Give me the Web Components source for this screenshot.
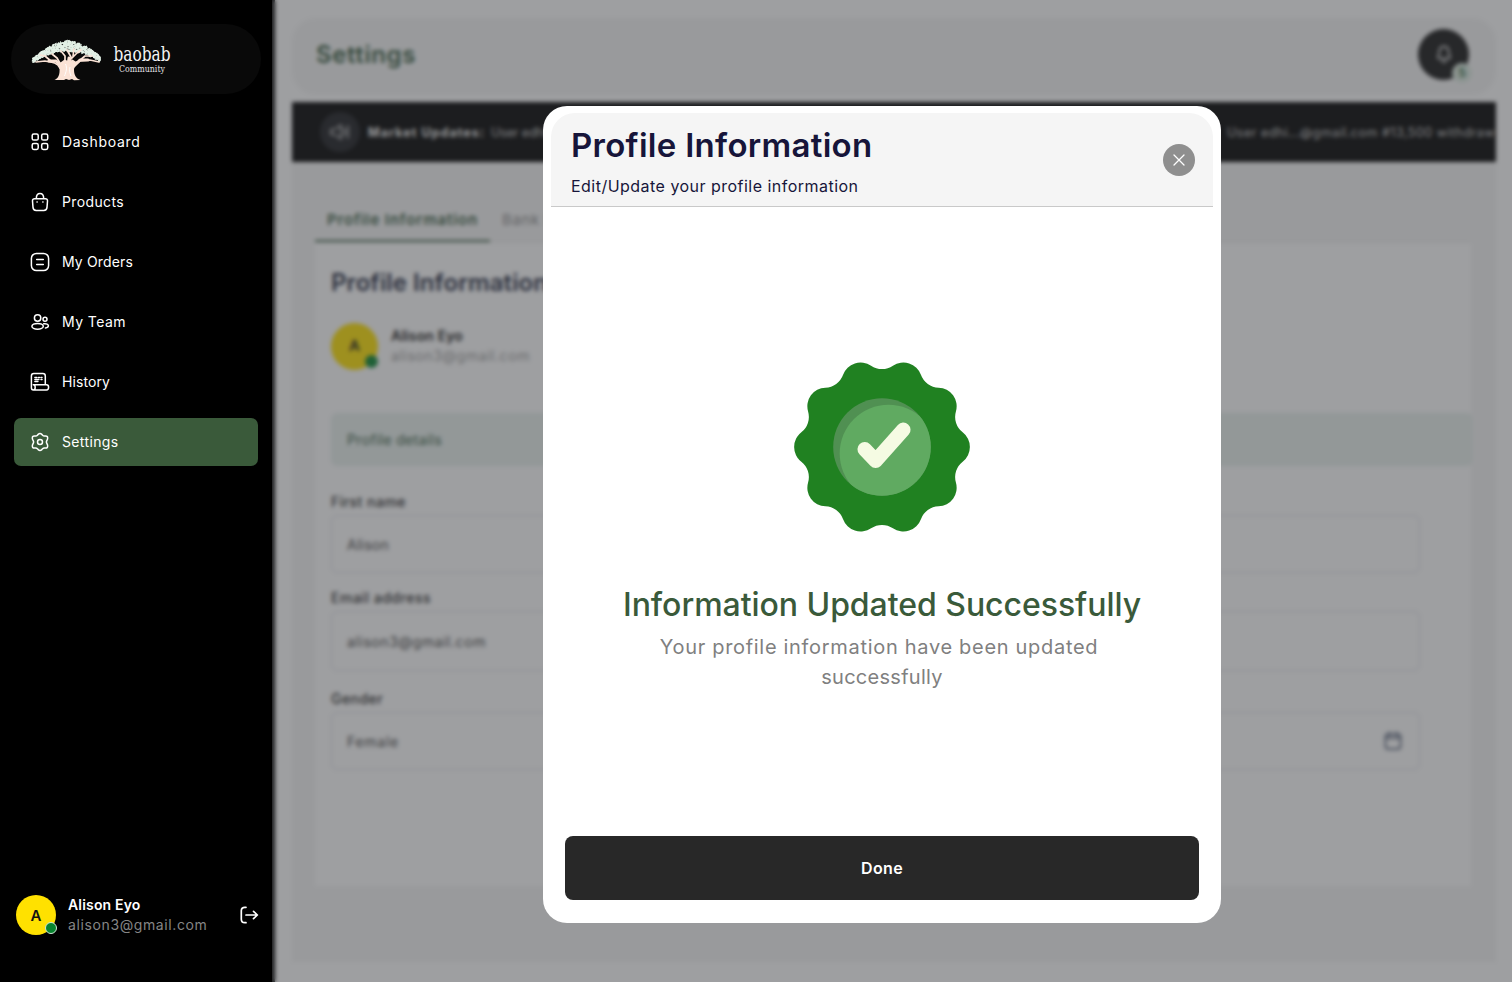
<!DOCTYPE html>
<html lang="en">
<head>
<meta charset="utf-8">
<title>Baobab Community – Settings</title>
<style>
  html, body { margin: 0; height: 100%; overflow: hidden; background: #fff; font-family: Inter, "Open Sans", sans-serif; color: #111; }
</style>
</head>
<body>
<baobab-app></baobab-app>

<script>
const define = (name, html, setup) => {
  const tpl = document.createElement('template');
  tpl.innerHTML = html;
  customElements.define(name, class extends HTMLElement {
    connectedCallback() {
      if (this.shadowRoot) return;
      this.attachShadow({ mode: 'open' }).appendChild(tpl.content.cloneNode(true));
      if (setup) setup(this, this.shadowRoot);
    }
  });
};

/* Single line label tracked out to a given width */
define('fit-text', `<style>
  :host { display: inline-block; white-space: nowrap; }
  span { display: inline-block; }
</style><span><slot></slot></span>`, (host, root) => {
  const span = root.querySelector('span');
  const target = +host.getAttribute('w');
  const width = span.getBoundingClientRect().width;
  const count = host.textContent.length;
  if (target && width) span.style.letterSpacing = ((target - width) / count).toFixed(3) + 'px';
});

const ICONS = {
  dashboard: '<rect x="2.200" y="2" width="6" height="6" rx="1.600"/><rect x="11.700" y="2" width="6" height="6" rx="1.600"/><rect x="2.200" y="11.400" width="6" height="6" rx="1.600"/><rect x="11.700" y="11.400" width="6" height="6" rx="1.600"/>',
  bag: '<path d="M4.6 6.7h10.8c1.3 0 2.2 1 2.1 2.3l-.5 6.4c-.1 1.8-1.400 3-3.200 3H6.200c-1.800 0-3.100-1.200-3.200-3L2.500 9c-.1-1.300.8-2.300 2.100-2.300zM6.300 6.500c0-2.700 1.300-5 3.700-5s3.700 2.300 3.700 5M7 10.100h.2M12.800 10.100h.2"/>',
  orders: '<rect x="1.400" y="1.400" width="17.200" height="17.200" rx="5"/><path d="M6.700 7.600h6.600M6.700 12.400h6.600"/>',
  team: '<circle cx="7.600" cy="6" r="3.200"/><circle cx="15" cy="7.300" r="2"/><ellipse cx="7.600" cy="14.300" rx="5.700" ry="2.900"/><path d="M13.700 11.800c2.700-.4 4.700.5 4.700 2 0 1.100-1.200 1.900-3 2.100"/>',
  history: '<path d="M3.300 17.900c-1.200 0-1.900-.9-1.900-2.200V3.900c0-1.500.9-2.400 2.400-2.400h9.100c1.500 0 2.400.9 2.400 2.400v8.700M3.300 17.900h13.200c1.300 0 2.100-1.100 2.100-2.600s-.8-2.500-2.100-2.500H3.600M3.300 17.900c1.200 0 1.900-1 1.900-2.500s-.7-2.600-1.900-2.600M4.900 5.400h2M8.500 5.400h1M11 5.400h1M4.900 7.500h4M11 7.500h1M4.900 9.600h3"/>',
  settings: '<circle cx="10" cy="10" r="2.500"/><path d="M8.160 2.400Q10 .7 11.840 2.400C12.700 3.200 13.100 4.300 14.900 4C17.200 3.600 18 4.900 17.500 7.100C17.200 8.300 16.400 8.900 16.400 10S17.200 11.700 17.500 12.900C18 15.100 17.200 16.400 14.900 16C13.100 15.700 12.700 16.800 11.840 17.600Q10 19.300 8.160 17.600C7.300 16.800 6.900 15.700 5.100 16C2.800 16.400 2 15.100 2.500 12.900C2.800 11.700 3.600 11.100 3.600 10S2.800 8.300 2.500 7.100C2 4.900 2.800 3.600 5.100 4C6.900 4.300 7.300 3.200 8.160 2.400z"/>',
  logout: '<path d="M6 2.300H4.800C2.600 2.300 1.300 3.500 1.300 5.700v8.600c0 2.200 1.300 3.400 3.500 3.400H6M6 10h11M13.500 6.300L17.400 10l-3.900 3.700"/>',
  close: '<path d="M5 5l10 10M15 5L5 15"/>',
  bell: '<path d="M10 2.500c-3 0-4.600 2.300-4.600 5 0 3-1 3.900-1.500 5.200-.3 1 .4 1.800 1.400 1.800h9.400c1 0 1.700-.8 1.400-1.800-.5-1.300-1.500-2.200-1.500-5.200 0-2.700-1.600-5-4.600-5zM8 17.300c1 .9 3 .9 4 0"/>',
  speaker: '<path d="M1 7.500v5h3.500l6.500 4.500V3L4.500 7.500zM14 6.500c1.300 2 1.300 5 0 7M18 4v12"/>',
  calendar: '<rect x="2.500" y="3" width="15" height="15" rx="3"/><path d="M2.500 7h15M6.500 1.500v3M13.500 1.500v3"/>'
};
define('ui-icon', `<style>
  :host { display: block; width: 20px; height: 20px; flex: none; }
  svg { display: block; width: 100%; height: 100%; fill: none; stroke: currentColor; stroke-linecap: round; stroke-linejoin: round; }
</style><svg viewBox="0 0 20 20"></svg>`, (host, root) => {
  const svg = root.querySelector('svg');
  svg.setAttribute('stroke-width', host.getAttribute('weight') || 1.5);
  svg.innerHTML = ICONS[host.getAttribute('name')];
});

define('brand-logo', `<style>
  :host { display: flex; box-sizing: border-box; width: 250px; height: 70px; margin: 24px 0 0 11px; border-radius: 35px; background: #090909; }
  svg { display: block; }
</style>
<svg width="250" height="70" viewBox="11 24 250 70">
  <g id="leaves" fill="#e3f1e6"></g>
  <g stroke="#fbe3d6" fill="none" stroke-linecap="round" stroke-linejoin="round">
    <path d="M60 68C57 62 51 62 45 61L36 62M52 62L45 56 40 55M61 65L57 58 52 54M65 66L65 56 61 51M70 66L71 57 67 50M73 66L80 61 90 60 99 62M79 61L85 56 92 56M71 59L77 53 81 50M73 56L74 49" stroke-width="1.700"/>
    <path d="M62 67L56 61 49 61M73 67L80 60 88 60M68 66L69 58" stroke-width="3"/>
  </g>
  <path d="M54.500 80c4-1.500 5.500-6 5-11.500-.4-3.500-3-6-5-7.500l6 1.500 4-3 5 2 3-2 3 2 4-1c-3 2-5.500 5-5.500 9 0 5 1.500 9 6.500 10.500l-6.500.2-2-1.200-3 1-3-1-2 1z" fill="#fbe3d6"/>
  <path d="M65.500 64c2 4 .5 8-1 12M70 67c-1 4 0 6 1 9" stroke="#fff" stroke-width=".9" fill="none"/>
  <text x="113.500" y="61" textLength="57" lengthAdjust="spacingAndGlyphs" font-family="'DejaVu Serif', serif" font-size="19.500" fill="#f4f4f4">baobab</text>
  <text x="119" y="72.300" textLength="46" lengthAdjust="spacingAndGlyphs" font-family="'DejaVu Serif', serif" font-size="9.500" fill="#e6e6e6">Community</text>
</svg>`, (host, root) => {
  let seed = 11, out = '';
  const rnd = () => (seed = (seed * 16807) % 2147483647) / 2147483647;
  for (let i = 0; i < 620; i++) {
    const x = 32 + rnd() * 67, k = Math.abs(x - 66.500) / 35;
    const top = 40.500 + 18 * Math.pow(k, 1.700);
    const depth = 11 - 6.500 * k;
    const y = top + rnd() * depth;
    out += `<path d="M${x.toFixed(1)} ${y.toFixed(1)}l${(1 + rnd()).toFixed(1)} -.9 ${(rnd()).toFixed(1)} 1.500 -1.600 .8z"/>`;
  }
  root.getElementById('leaves').innerHTML = out;
});

define('nav-item', `<style>
  :host { display: flex; align-items: center; box-sizing: border-box; gap: 12px; height: 48px; padding-left: 16px; border-radius: 7px; color: #fff; font-size: 14px; }
  :host([active]) { background: #3a5a3a; }
  .label { padding-bottom: 2px; }
</style><ui-icon></ui-icon><div class="label"><slot></slot></div>`, (host, root) => {
  const old = root.querySelector('ui-icon');
  const icon = document.createElement('ui-icon');
  icon.setAttribute('name', host.getAttribute('icon'));
  old.replaceWith(icon);
});

define('user-avatar', `<style>
  :host { display: grid; place-items: center; position: relative; width: var(--size, 40px); height: var(--size, 40px); border-radius: 50%; background: #ffe100; color: #111; font-weight: 600; font-size: 15px; flex: none; }
  i { position: absolute; right: -1px; bottom: 1px; box-sizing: border-box; width: 12px; height: 12px; border-radius: 50%; background: #07842f; border: 1px solid #cfe8d6; }
  :host([large]) i { right: 0; bottom: 2px; width: 13px; height: 13px; border: 0; }
</style><slot></slot><i></i>`);

define('side-bar', `<style>
  :host { display: flex; flex-direction: column; width: 272px; height: 982px; background: #000; color: #fff; }
  nav { display: flex; flex-direction: column; gap: 12px; margin: 24px 14px 0; }
  footer { display: flex; align-items: center; margin: auto 12px 46px 16px; height: 42px; }
  .who { display: flex; flex-direction: column; margin-left: 12px; font-size: 14px; line-height: 20px; flex: 1; }
  .who fit-text:first-child { font-weight: 600; }
  .mail { color: #858585; }
</style>
<brand-logo></brand-logo>
<nav>
  <nav-item icon="dashboard"><fit-text w="78.500">Dashboard</fit-text></nav-item>
  <nav-item icon="bag"><fit-text w="62">Products</fit-text></nav-item>
  <nav-item icon="orders"><fit-text w="71">My Orders</fit-text></nav-item>
  <nav-item icon="team"><fit-text w="64">My Team</fit-text></nav-item>
  <nav-item icon="history"><fit-text w="48">History</fit-text></nav-item>
  <nav-item icon="settings" active><fit-text w="56.500">Settings</fit-text></nav-item>
</nav>
<footer>
  <user-avatar>A</user-avatar>
  <div class="who"><fit-text w="72.500">Alison Eyo</fit-text><fit-text class="mail" w="139.500">alison3@gmail.com</fit-text></div>
  <ui-icon name="logout" weight="1.700"></ui-icon>
</footer>`);

define('form-field', `<style>
  :host { display: flex; flex-direction: column; font-size: 14px; width: 1089px; }
  .label { height: 22px; line-height: 22px; font-weight: 500; color: #222; }
  .box { display: flex; align-items: center; justify-content: space-between; box-sizing: border-box; height: var(--h, 58px); margin-top: 2px; padding: 0 16px 0 15px; border: 1px solid #dfdfe6; border-radius: 6px; color: #3c3c3c; }
</style><div class="label"><slot name="label"></slot></div><div class="box"><slot></slot><slot name="icon"></slot></div>`);

define('settings-page', `<style>
  :host { display: flex; flex-direction: column; box-sizing: border-box; width: 1237px; height: 982px; padding: 18px 16px 20px 17px; background: #fff; overflow: hidden; }
  header { display: flex; justify-content: space-between; align-items: center; box-sizing: border-box; height: 77px; padding: 0 27px 5px 24px; border-radius: 24px; background: #f6f6f6; color: #31563a; font-size: 24px; font-weight: 600; }
  .bell { position: relative; display: grid; place-items: center; width: 51px; height: 51px; border-radius: 50%; background: #161616; color: #fff; }
  .bell b { position: absolute; right: -3px; bottom: -3px; width: 20px; height: 20px; border-radius: 50%; background: #dcebe0; color: #1f5b35; font: 600 12px/20px Inter, sans-serif; text-align: center; }
  .ticker { display: flex; align-items: center; height: 60px; margin-top: 7px; padding-left: 28px; background: #000; color: #c8c8c8; font-size: 12.500px; overflow: hidden; white-space: nowrap; }
  .ticker .ic { display: grid; place-items: center; width: 40px; height: 40px; border-radius: 50%; background: #1b1c20; margin-right: 8px; flex: none; }
  .ticker strong { margin-right: 6px; color: #f0f0f0; }
  .ticker .lead { width: 736px; flex: none; }
  .panel { flex: 1; box-sizing: border-box; padding: 39px 25px 76px 23px; background: #f6f6f6; }
  .tabs { display: flex; height: 40px; border-bottom: 1px solid #e6e6e6; font-size: 15px; color: #888; }
  .tabs div { box-sizing: border-box; height: 41px; padding: 9px 12px 0; }
  .tabs .on { border-bottom: 2.500px solid #31563a; color: #31563a; font-weight: 600; }
  .card { display: flex; flex-direction: column; box-sizing: border-box; height: 643px; margin-top: 1px; padding: 23px 0 0 16px; background: #fff; }
  h2 { margin: 0; font-size: 24px; line-height: 34px; font-weight: 600; color: #20263c; }
  .user { display: flex; align-items: center; gap: 13px; height: 48px; margin: 22px 0 43px; font-size: 14px; line-height: 20px; }
  .user div { display: flex; flex-direction: column; }
  .user user-avatar { --size: 47px; }
  .user .n { font-weight: 600; }
  .user .m { color: #999; }
  .strip { display: flex; align-items: center; flex: none; box-sizing: border-box; height: 53px; margin-right: -2px; padding: 0 0 1px 16px; border-radius: 6px; background: #e9f1ee; color: #31563a; font-size: 14px; margin-bottom: 25px; }
  form-field + form-field { margin-top: 14px; }
  form-field:last-child { margin-top: 17px; }
</style>
<header><fit-text w="100">Settings</fit-text><div class="bell"><ui-icon name="bell"></ui-icon><b>5</b></div></header>
<div class="ticker"><div class="ic"><ui-icon name="speaker"></ui-icon></div><strong><fit-text w="117">Market Updates:</fit-text></strong><div class="lead"><fit-text w="66">User edhi...</fit-text></div><fit-text w="268">User edhi...@gmail.com #13,500 withdraw</fit-text></div>
<div class="panel">
  <div class="tabs"><div class="on"><fit-text w="151">Profile Information</fit-text></div><div><fit-text w="95">Bank Details</fit-text></div></div>
  <div class="card">
    <h2><fit-text w="217">Profile Information</fit-text></h2>
    <div class="user"><user-avatar large>A</user-avatar><div><fit-text class="n" w="72">Alison Eyo</fit-text><fit-text class="m" w="139">alison3@gmail.com</fit-text></div></div>
    <div class="strip"><fit-text w="95">Profile details</fit-text></div>
    <form-field><fit-text slot="label" w="75">First name</fit-text><fit-text w="42">Alison</fit-text></form-field>
    <form-field style="--h: 60px"><fit-text slot="label" w="100">Email address</fit-text><fit-text w="139">alison3@gmail.com</fit-text></form-field>
    <form-field><fit-text slot="label" w="52">Gender</fit-text><fit-text w="52">Female</fit-text><ui-icon slot="icon" name="calendar" weight="2" style="color:#667085"></ui-icon></form-field>
  </div>
</div>`);

define('success-badge', `<style>:host, svg { display: block; width: 180px; height: 180px; }</style>
<svg viewBox="-90 -90 180 180">
  <path id="seal" fill="#208121"/>
  <clipPath id="disc"><circle r="48.800"/></clipPath>
  <circle r="48.800" fill="#509052"/>
  <circle cx="6.500" cy="6.500" r="48.800" fill="#60aa61" clip-path="url(#disc)"/>
  <path d="M-17.300 2.200L-6.300 13.800 21.300 -17.200" fill="none" stroke="#f5fbe3" stroke-width="14.500" stroke-linecap="round" stroke-linejoin="round"/>
</svg>`, (host, root) => {
  /* ten lobes: convex arcs joined by tangent concave arcs */
  const at = deg => (82 * Math.cos(deg * Math.PI / 180)).toFixed(2) + ' ' + (82 * Math.sin(deg * Math.PI / 180)).toFixed(2);
  let d = 'M' + at(-18 + 7.670);
  for (let i = 0; i < 10; i++) {
    const valley = 18 + i * 36;
    d += `A18.600 18.600 0 0 1 ${at(valley - 7.670)}A19.500 19.500 0 0 0 ${at(valley + 7.670)}`;
  }
  root.getElementById('seal').setAttribute('d', d + 'Z');
});

define('modal-dialog', `<style>
  :host { display: flex; flex-direction: column; box-sizing: border-box; width: 678px; height: 817px; padding: 7px 8px 23px; border-radius: 24px; background: #fff; }
  header { display: flex; justify-content: space-between; box-sizing: border-box; height: 94px; padding: 7px 18px 0 20px; border-radius: 24px 24px 0 0; border-bottom: 1px solid #c9c9c9; background: #f5f5f5; color: #17153a; }
  h1 { margin: 0; font-size: 33px; line-height: 50px; font-weight: 600; }
  p { margin: 0; font-size: 16px; line-height: 32px; }
  button { display: grid; place-items: center; width: 32px; height: 32px; margin-top: 24px; padding: 0; border: 0; border-radius: 50%; background: #8f8f8f; color: #fff; }
  button ui-icon { width: 20px; height: 20px; }
  .body { flex: 1; }
  .done { display: grid; place-items: center; height: 64px; margin: 0 14px; border-radius: 8px; background: #282828; color: #fff; font-size: 16px; font-weight: 600; }
</style>
<header><div><h1><slot name="title"></slot></h1><p><slot name="subtitle"></slot></p></div><button aria-label="Close"><ui-icon name="close" weight="1.300"></ui-icon></button></header>
<div class="body"><slot></slot></div>
<div class="done"><slot name="action"></slot></div>`);

define('success-message', `<style>
  :host { display: flex; flex-direction: column; align-items: center; padding-top: 150px; }
  h2 { margin: 46px 0 0; font-size: 32px; line-height: 44px; font-weight: 500; color: #3a5a3a; }
  p { display: flex; flex-direction: column; align-items: center; margin: 5px 0 0; font-size: 20px; line-height: 30px; color: #808080; }
  p fit-text:first-child { margin-right: 6px; }
</style>
<success-badge></success-badge>
<h2><fit-text w="518">Information Updated Successfully</fit-text></h2>
<p><fit-text w="438.500">Your profile information have been updated</fit-text><fit-text w="121.500">successfully</fit-text></p>`);

define('baobab-app', `<style>
  :host { display: grid; grid-template: 982px / 275px 1237px; width: 1512px; height: 982px; background: #000; }
  side-bar { grid-area: 1 / 1; z-index: 3; }
  settings-page { grid-area: 1 / 2; }
  .scrim { grid-area: 1 / 1 / 2 / 3; z-index: 2; background: rgba(57, 59, 64, .49); backdrop-filter: blur(2.300px); }
  modal-dialog { grid-area: 1 / 1 / 2 / 3; z-index: 4; margin: 106px 0 0 543px; }
</style>
<side-bar></side-bar>
<settings-page></settings-page>
<div class="scrim"></div>
<modal-dialog>
  <fit-text slot="title" w="301.500">Profile Information</fit-text>
  <fit-text slot="subtitle" w="287.500">Edit/Update your profile information</fit-text>
  <success-message></success-message>
  <fit-text slot="action" w="42">Done</fit-text>
</modal-dialog>`);
</script>
</body>
</html>
